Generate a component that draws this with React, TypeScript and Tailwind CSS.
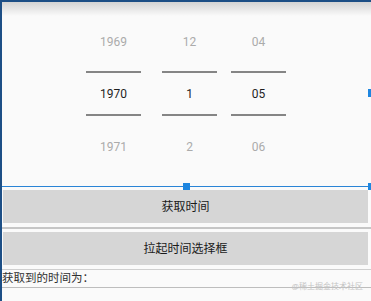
import React from "react";

const font = { fontFamily: 'Roboto, "Noto Sans CJK SC", sans-serif' };

function Column({ w, ml, top, mid, bot }: { w: string; ml: string; top: string; mid: string; bot: string }) {
  return (
    <div className={`flex flex-col ${w} ${ml}`}>
      <div className="h-[52px] flex items-center justify-center text-[12px] text-[#ababab]">{top}</div>
      <div className="mt-[3px] h-[45px] border-y-2 border-[#858585] flex items-center justify-center text-[12px] text-[#1f1f1f]">{mid}</div>
      <div className="mt-[16px] h-[30px] flex items-center justify-center text-[12px] text-[#ababab]">{bot}</div>
    </div>
  );
}

export default function App() {
  return (
    <div className="relative w-[371px] h-[301px] overflow-hidden bg-[#fafafa] border-l-2 border-t-2 border-[#1d4f86]" style={font}>
      <div className="absolute left-0 top-0 w-full h-[14px] bg-gradient-to-b from-[#d4d4d4] to-transparent" />
      {/* picker area */}
      <div className="h-[184px] pt-[14px] flex">
        <Column w="w-[55px]" ml="ml-[84px]" top="1969" mid="1970" bot="1971" />
        <Column w="w-[55px]" ml="ml-[21px]" top="12" mid="1" bot="2" />
        <Column w="w-[55px]" ml="ml-[14px]" top="04" mid="05" bot="06" />
      </div>
      {/* selection line */}
      <div className="h-[1px] bg-[#2a84d6] mr-[3px]" />
      <div className="absolute left-[181px] top-[181px] w-[7px] h-[7px] bg-[#1e86e0]" />
      <div className="absolute right-0 top-[181px] w-[3px] h-[7px] bg-[#1e86e0]" />
      <div className="absolute right-0 top-[87px] w-[3px] h-[8px] bg-[#1e86e0]" />
      {/* buttons */}
      <div className="mt-[3px] mx-[1px] mr-[3px] h-[33px] bg-[#d6d6d6] flex items-center justify-center text-[12px] text-[#1a1a1a]">获取时间</div>
      <div className="mt-[4px] h-[2px] bg-[#c6c6c6]" />
      <div className="mt-[3px] mx-[1px] mr-[3px] h-[33px] bg-[#d6d6d6] flex items-center justify-center text-[12px] text-[#1a1a1a]">拉起时间选择框</div>
      <div className="mt-[4px] h-[1px] bg-[#cfcfcf]" />
      <div className="h-[17px] flex items-center text-[11.5px] text-[#303030] leading-none">获取到的时间为：</div>
      <div className="h-[1px] bg-[#bdbdbd]" />
      <div className="absolute right-[8px] top-[281px] text-[8px] text-[#c4c4c4] leading-none">@稀土掘金技术社区</div>
    </div>
  );
}
